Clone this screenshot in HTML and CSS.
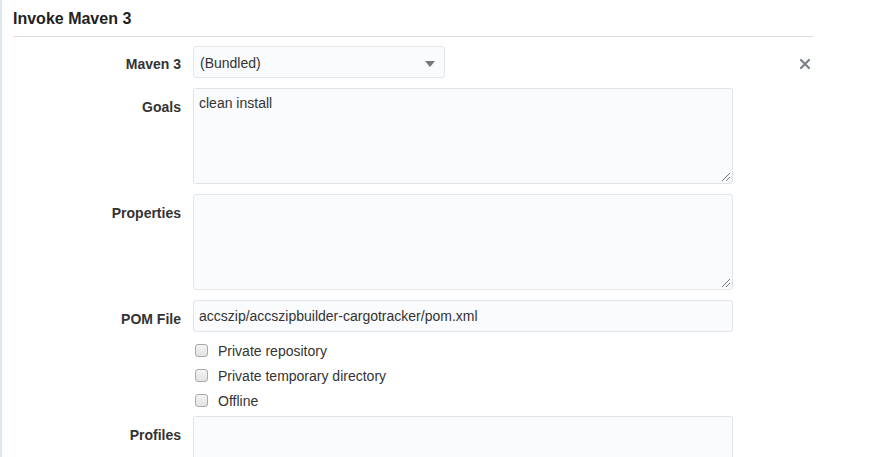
FILE: index.html
```html
<!DOCTYPE html>
<html>
<head>
<meta charset="utf-8">
<link rel="stylesheet" href="styles.css">
</head>
<body>
<div class="page">
  <div class="section">
    <h2 class="title">Invoke Maven 3</h2>
    <div class="form">
      <div class="label lbl-select">Maven 3</div>
      <div class="control">
        <div class="select">(Bundled)<span class="arrow"></span></div>
      </div>
      <div class="extra"><svg class="close" width="10" height="10" viewBox="0 0 10 10"><path d="M1 1 L9 9 M9 1 L1 9" stroke="#79818a" stroke-width="2.2" stroke-linecap="square"/></svg></div>

      <div class="label">Goals</div>
      <div class="control"><div class="textarea">clean install<span class="grip"></span></div></div>
      <div class="extra"></div>

      <div class="label">Properties</div>
      <div class="control"><div class="textarea"><span class="grip"></span></div></div>
      <div class="extra"></div>

      <div class="label">POM File</div>
      <div class="control"><div class="input">accszip/accszipbuilder-cargotracker/pom.xml</div></div>
      <div class="extra"></div>

      <div class="label"></div>
      <div class="control checks">
        <label class="check"><span class="box"></span>Private repository</label>
        <label class="check"><span class="box"></span>Private temporary directory</label>
        <label class="check"><span class="box"></span>Offline</label>
      </div>
      <div class="extra"></div>

      <div class="label">Profiles</div>
      <div class="control"><div class="textarea"></div></div>
      <div class="extra"></div>
    </div>
  </div>
</div>
</body>
</html>
```
FILE: styles.css
```css
html, body {
  margin: 0;
  padding: 0;
  background: #fff;
  overflow: hidden;
}
body {
  font-family: "Liberation Sans", Arial, sans-serif;
  font-size: 14px;
  color: #333;
}
.page {
  border-left: 2px solid #dfe5ec;
  height: 457px;
  box-sizing: border-box;
  padding-left: 11px;
  overflow: hidden;
}
.section {
  width: 800px;
}
.title {
  margin: 0;
  font-size: 16px;
  font-weight: bold;
  color: #222;
  padding-top: 9px;
  height: 27px;
  line-height: 19px;
  border-bottom: 1px solid #dcdcdc;
}
.form {
  display: grid;
  grid-template-columns: 168px 540px 79px;
  column-gap: 12px;
  row-gap: 10px;
  padding-top: 9px;
}
.label {
  text-align: right;
  font-weight: bold;
  padding-top: 11px;
  line-height: 17px;
  color: #333;
}
.label.lbl-select {
  padding-top: 10px;
}
.control {
  min-width: 0;
}
.select {
  position: relative;
  width: 252px;
  height: 32px;
  box-sizing: border-box;
  border: 1px solid #e1e4e8;
  border-radius: 3px;
  background: #fafbfd;
  padding: 0 0 0 6px;
  line-height: 32px;
}
.arrow {
  position: absolute;
  right: 9px;
  top: 14px;
  width: 0;
  height: 0;
  border-left: 5px solid transparent;
  border-right: 5px solid transparent;
  border-top: 6px solid #777;
}
.extra {
  display: flex;
  justify-content: flex-end;
  align-items: flex-start;
  padding-right: 14px;
}
.close {
  display: block;
  margin-top: 13px;
}
.textarea {
  position: relative;
  height: 96px;
  box-sizing: border-box;
  border: 1px solid #e1e4e8;
  border-radius: 3px;
  background: #fafbfd;
  padding: 6px 5px;
  line-height: 17px;
}
.grip {
  position: absolute;
  right: 2px;
  bottom: 2px;
  width: 8px;
  height: 8px;
  background: linear-gradient(135deg, transparent 45%, #777 45%, #777 55%, transparent 55%, transparent 70%, #777 70%, #777 80%, transparent 80%);
}
.input {
  height: 32px;
  box-sizing: border-box;
  border: 1px solid #e1e4e8;
  border-radius: 3px;
  background: #fafbfd;
  padding: 0 5px;
  line-height: 31px;
}
.checks {
  display: flex;
  flex-direction: column;
  margin-top: -4px;
  margin-bottom: -7px;
}
.check {
  display: flex;
  align-items: center;
  height: 25px;
}
.box {
  width: 11px;
  height: 11px;
  border: 1px solid #a9a9a9;
  border-radius: 3px;
  background: linear-gradient(#f3f3f3, #e3e3e3);
  margin-left: 2px;
  margin-right: 10px;
}
```
